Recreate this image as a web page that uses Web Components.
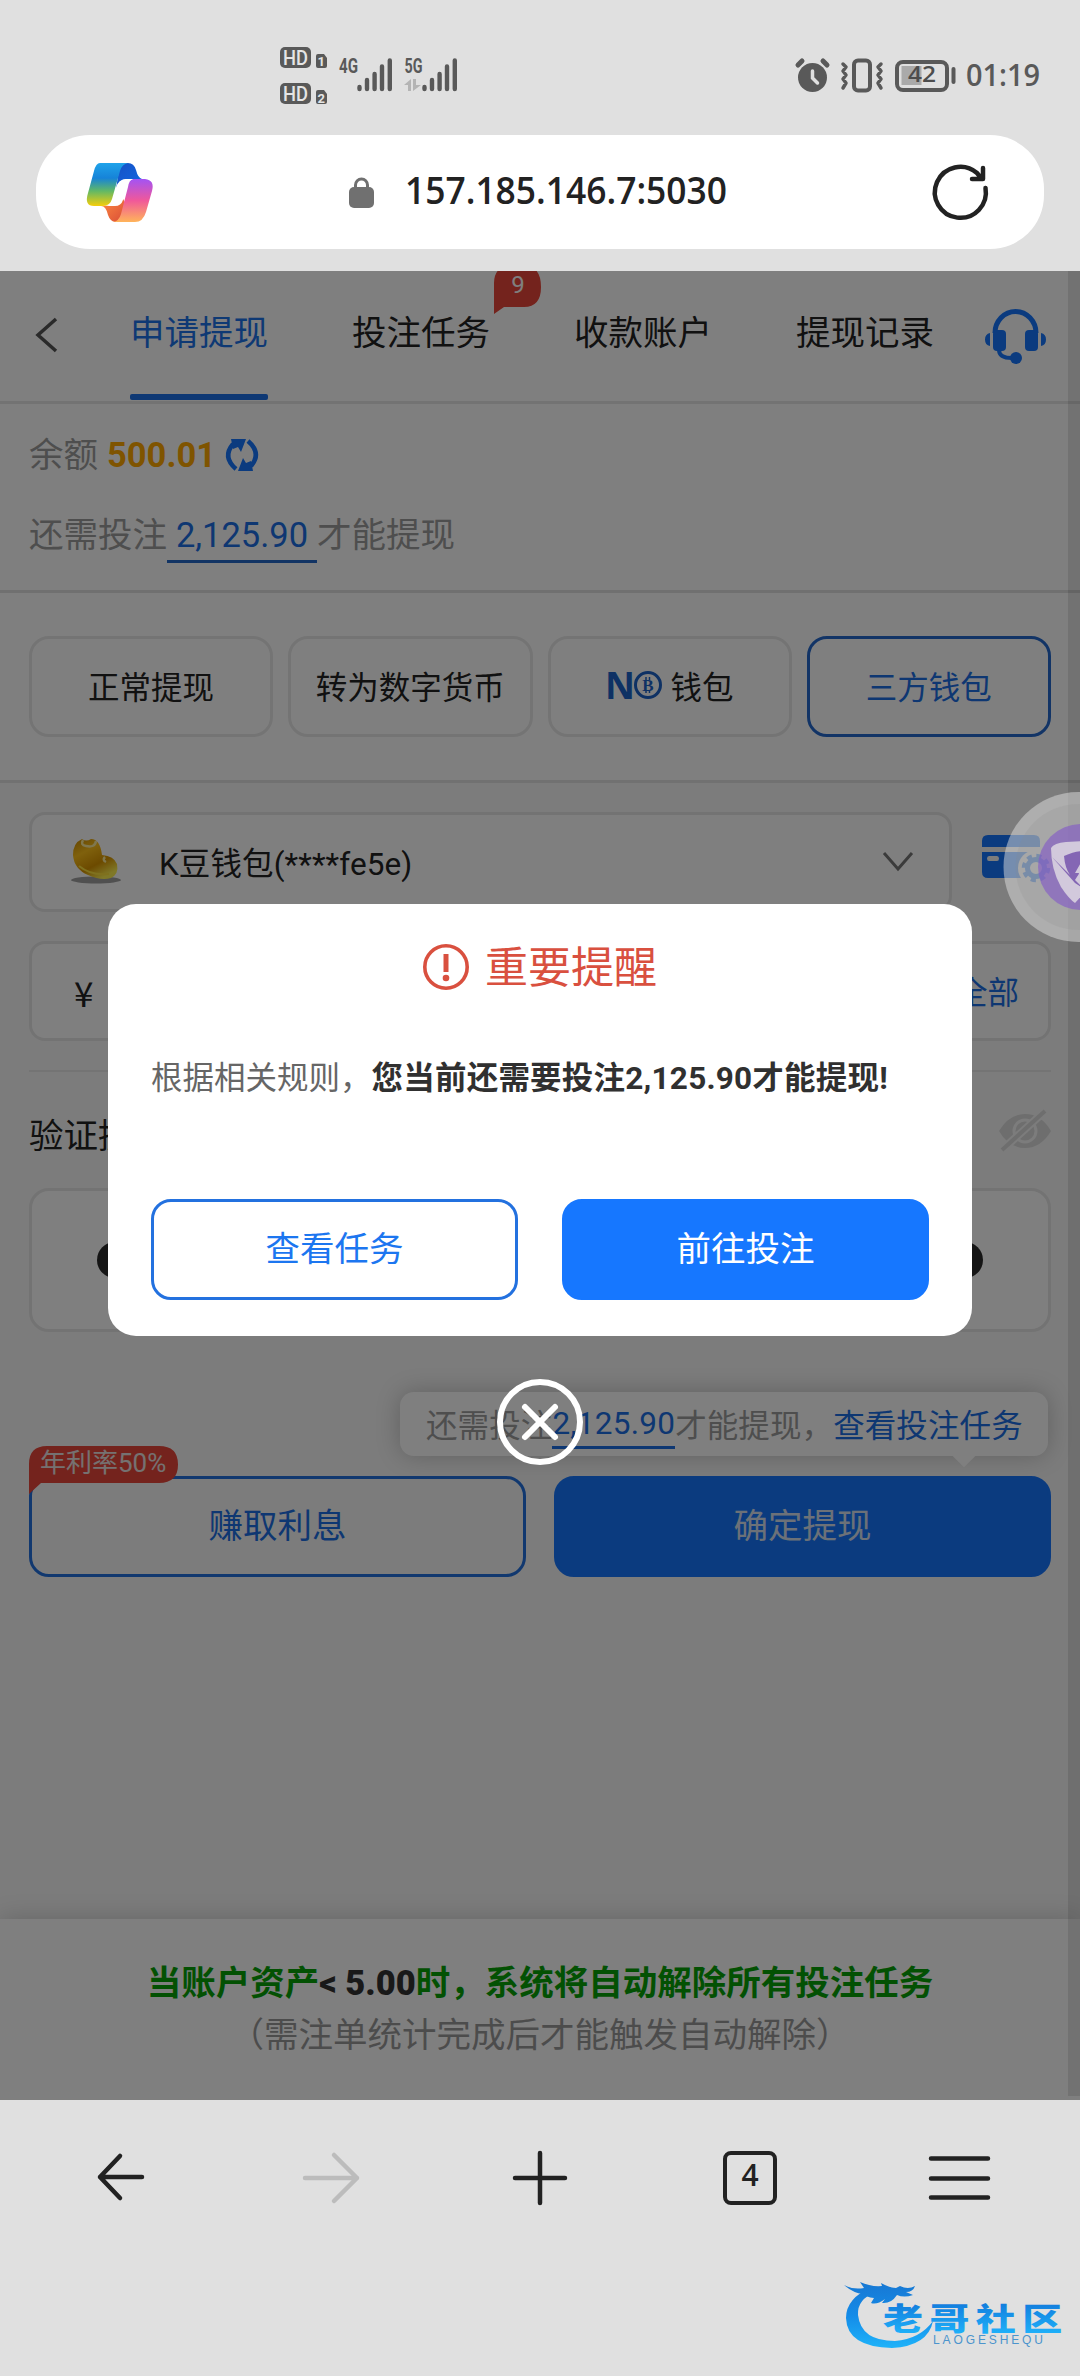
<!DOCTYPE html>
<html lang="zh-CN">
<head>
<meta charset="utf-8">
<title>申请提现</title>
<style>
html,body{margin:0;background:#e0e0e0}
body{font-family:Roboto,"Noto Sans CJK SC",sans-serif;color:#222;width:1080px;height:2376px;overflow:hidden}
</style>
</head>
<body>
<phone-screen></phone-screen>
<script>
const define = (name, css, html) => customElements.define(name, class extends HTMLElement {
  constructor() {
    super();
    this.attachShadow({ mode: 'open' }).innerHTML = `<style>*{box-sizing:border-box}svg{display:block;overflow:visible;flex:none}:host{display:block;box-sizing:border-box}${css}</style>${html}`;
  }
});

define('status-bar', `:host{display:flex;justify-content:space-between;height:135px;padding:45px 40px 0 280px}
.l,.r{display:flex}.l{gap:10px}`, `
<div class="l">
 <svg width="49" height="62" font-family="Roboto" font-weight="500">
  <g fill="#595959"><rect y="2" width="31" height="21" rx="5"/><rect y="38" width="31" height="21" rx="5"/>
  <path d="M38 9h6l3 4v8q0 2-2 2h-7q-2 0-2-2v-10q0-2 2-2zM38 45h6l3 4v8q0 2-2 2h-7q-2 0-2-2v-10q0-2 2-2z"/></g>
  <g fill="#e5e5e5"><text x="3" y="19.500" font-size="20" textLength="25" lengthAdjust="spacingAndGlyphs">HD</text><text x="3" y="55.500" font-size="20" textLength="25" lengthAdjust="spacingAndGlyphs">HD</text>
  <text x="37.500" y="21" font-size="13" font-weight="700">1</text><text x="37.500" y="57.500" font-size="13" font-weight="700">2</text></g>
 </svg>
 <svg width="118" height="62" font-family="Roboto" font-weight="700" fill="#595959">
  <text x="0" y="27.500" font-size="20.500" textLength="19" lengthAdjust="spacingAndGlyphs">4G</text>
  <text x="65.500" y="27.500" font-size="20.500" textLength="18" lengthAdjust="spacingAndGlyphs">5G</text>
  <g fill="none" stroke="#595959" stroke-width="4.400" stroke-linecap="round"><path d="M20.500 42v2M28 35v9M35.600 29v15M43 21.500v22.500M50.800 15.500v28.500"/><path transform="translate(65)" d="M20.500 42v2M28 35v9M35.600 29v15M43 21.500v22.500M50.800 15.500v28.500"/></g>
  <path d="M65 40l7-6v12h-3v-6zM74 34h3v6h5l-8 6z" fill="#b4b4b4"/>
 </svg>
</div>
<div class="r">
 <svg width="246" height="60" fill="none" stroke="#595959" stroke-linecap="round">
  <g transform="translate(1)">
  <circle cx="17.500" cy="32.500" r="14.500" fill="#595959" stroke="none"/><path d="M3 20l4-4M28 16l4 4" stroke-width="5"/><path d="M17.500 26v7l5 5" stroke="#e0e0e0" stroke-width="3.500"/>
  <rect x="59" y="15.500" width="16" height="30" rx="4" stroke-width="4"/>
  <path d="M48 19l3 3-3 4 3 4-3 4 3 4-3 5M86 19l-3 3 3 4-3 4 3 4-3 4 3 5" stroke-width="3.500" stroke-linejoin="round"/></g>
  <rect x="103" y="17" width="50" height="28" rx="6" stroke-width="4"/><rect x="107.500" y="21" width="20" height="19" fill="#aaa" stroke="none"/><path d="M159.500 24v13" stroke-width="4"/>
  <g stroke="none" fill="#4d4d4d" font-family="Open Sans"><text x="114" y="37" font-size="22" font-weight="600" textLength="28" lengthAdjust="spacingAndGlyphs">42</text>
  <text x="172" y="40.500" font-size="31.500" font-weight="600" fill="#595959" textLength="74" lengthAdjust="spacingAndGlyphs">01:19</text></g>
 </svg>
</div>`);

define('address-bar', `:host{display:flex;align-items:center;height:114px;margin:0 36px 22px;padding:0 56px 0 51px;border-radius:54px;background:#fff;justify-content:space-between}
.u{display:flex;align-items:center;gap:31px;margin-right:10px}`, `
<svg width="66" height="62" viewBox="0 0 66 62">
 <defs><linearGradient id="a" x2="0" y2="1"><stop stop-color="#1fa3ea"/><stop offset=".35" stop-color="#1683d8"/><stop offset=".65" stop-color="#61b866"/><stop offset="1" stop-color="#f5ce0a"/></linearGradient>
 <linearGradient id="c" x2="0" y2="1"><stop stop-color="#a353f4"/><stop offset=".5" stop-color="#f0589a"/><stop offset="1" stop-color="#ffb45a"/></linearGradient>
 <linearGradient id="d" x2="1" y2="1"><stop stop-color="#1651c5"/><stop offset="1" stop-color="#1268e2"/></linearGradient><linearGradient id="e" x2="1" y2="1"><stop stop-color="#ff8e43"/><stop offset="1" stop-color="#d84a36"/></linearGradient></defs>
 <path d="M33 2h8q6 0 8 7 2 8 6 9h-16q-8 1-10 10z" fill="url(#d)"/>
 <path d="M14 45q5 0 7 9 2 6 7 7h8l4-16-5-9-6 8z" fill="url(#e)"/>
 <path d="M13 2h28q-6 1-8 8l-8 28q-2 7-9 7h-9q-10 0-6-13l6-22q2-8 6-8z" fill="url(#a)"/>
 <path d="M44 18h14q10 1 7 12l-6 21q-3 10-11 10H26q6-1 8-8l7-27q1-7 5-8z" fill="url(#c)"/>
 <path d="M29 27q2-9 11-9h6q-5 1-6 7l-4 14q-2 6-8 6h-9q5-1 7-7z" fill="#fff"/>
</svg>
<div class="u">
 <svg width="25" height="31"><path d="M6.500 12V8a6 6 0 0 1 12 0v4" fill="none" stroke="#707070" stroke-width="3"/><rect width="25" height="21" y="10" rx="5" fill="#707070"/></svg>
 <svg width="322" height="40"><text x="0" y="32" font-family="Open Sans" font-size="37" font-weight="600" fill="#222" textLength="322" lengthAdjust="spacingAndGlyphs">157.185.146.7:5030</text></svg>
</div>
<svg width="55" height="55" fill="none" stroke="#222" stroke-width="4.500" stroke-linecap="round" stroke-linejoin="round"><path d="M52.500 23A25.500 25.500 0 1 1 44 8l4 5M50 3v11H39"/></svg>`);

define('tab-link', `:host{position:relative;width:138px;height:130px;font-size:34.500px;line-height:125px;white-space:nowrap}
:host([active]){color:#1c72e8}
:host([active])::after{content:"";display:block;height:6px;margin-top:-2px;border-radius:2px;background:#1c70e8}
.n{display:none}:host([count]) .n{display:block;position:absolute;left:142px;top:-6px}`, `<slot></slot>
<svg class="n" width="47" height="49"><path d="M0 49V18Q0 0 20 0h8q19 0 19 22 0 20-17 20H10z" fill="#e8473a"/><text x="24" y="28" text-anchor="middle" fill="#fff" font-size="24" font-family="Roboto">9</text></svg>`);

define('tab-strip', `:host{display:flex;height:133px;background:#fff;border-bottom:3px solid #e6e6e6;align-items:flex-start}
.b{margin:47px 73px 0 36px}.t{display:flex;gap:84px}.h{margin:38px 0 0 51px}`, `
<svg class="b" width="21" height="34" fill="none" stroke="#555" stroke-width="3.500"><path d="M20 1L2 17l18 16"/></svg>
<div class="t"><tab-link active>申请提现</tab-link><tab-link count>投注任务</tab-link><tab-link>收款账户</tab-link><tab-link>提现记录</tab-link></div>
<svg class="h" width="61" height="55" fill="#1677ff"><path d="M10 24a20.500 21.500 0 0 1 41 0" fill="none" stroke="#1677ff" stroke-width="5"/><rect x="8" y="21" width="13" height="21" rx="4"/><rect x="40" y="21" width="13" height="21" rx="4"/><path d="M5 24v13Q0 36 0 30.500T5 24zM56 24v13q5-1 5-6.500T56 24z"/><path d="M14 39v2q0 8 13 8" fill="none" stroke="#1677ff" stroke-width="4"/><circle cx="31" cy="49" r="6"/></svg>`);

define('balance-panel', `:host{height:189px;padding:29px 29px 0;border-bottom:3px solid #e0e0e0;background:#fff;font-size:34.500px;color:#9c9c9c;line-height:44px}
div{display:flex;height:44px;align-items:center}.x{margin-top:36px}b{color:#ffa800;font-weight:700;margin:0 9px 0 9px}
u{text-decoration:none;color:#1c6fe4;border-bottom:3px solid #2468c8;width:150px;text-align:center;height:50px;line-height:44px;margin-top:6px}`, `
<div>余额<b>500.01</b><svg width="34" height="34" fill="none" stroke="#1677ff"><path d="M11 31Q-3 19 8 6" stroke-width="4.500"/><path d="M6 1l15 0-5 13-3-5-5 2z" fill="#1677ff" stroke="none"/><path d="M23 3q14 12 3 25" stroke-width="4.500"/><path d="M28 33l-15 0 5-13 3 5 5-2z" fill="#1677ff" stroke="none"/></svg></div>
<div class="x">还需投注<u>2,125.90</u>才能提现</div>`);

define('method-tile', `:host{flex:1;display:flex;align-items:center;justify-content:center;gap:9px;height:101px;border:3px solid #e9e9e9;border-radius:20px;font-size:31.500px;white-space:nowrap;background:#fff;padding-bottom:3px}
:host([active]){border-color:#2569cd;color:#1c6fe4}`, `<slot></slot>`);

define('method-row', `:host{display:flex;gap:15px;height:190px;padding:43px 29px 0;background:#fff;border-bottom:3px solid #e2e2e2}`, `
<method-tile>正常提现</method-tile><method-tile>转为数字货币</method-tile>
<method-tile><svg width="56" height="30"><text x="-1" y="28.500" font-family="Open Sans" font-size="38" font-weight="700" fill="#1c63c8" textLength="30" lengthAdjust="spacingAndGlyphs">N</text><circle cx="42" cy="15" r="12.500" fill="none" stroke="#1c63c8" stroke-width="3"/><text x="42" y="21" text-anchor="middle" font-family="Liberation Serif" font-weight="700" font-size="17" fill="#1c63c8">B</text><path d="M40 7v3M43.500 7v3M40 20v3M43.500 20v3" stroke="#1c63c8" stroke-width="1.500"/></svg>钱包</method-tile>
<method-tile active>三方钱包</method-tile>`);

define('withdraw-form', `:host{padding:29px 29px 0;font-size:31.500px}
.row{display:flex;align-items:center}.box{display:flex;align-items:center;background:#fff;border:3px solid #e6e6e6;border-radius:16px;height:100px;padding-bottom:3px}
.sel{width:924px;padding:0 36px 3px 39px}.sel span{margin-left:37px;letter-spacing:.1px}.sel .c{margin:2px 0 0 auto}.card{margin:-8px 0 0 30px}
.amt{margin-top:29px;padding:0 29px 2px 42px;justify-content:space-between}.amt i{font-style:normal;color:#1c6fe4}.amt span{font-family:"Noto Sans CJK SC";font-size:35px;line-height:40px;margin-top:4px}
hr{border:0;height:2px;background:#e9e9e9;margin:29px 0 0}
.lab{height:116px;justify-content:space-between;font-size:34.500px;padding-top:6px;margin:0}.lab svg{margin-top:-4px}
.pw{height:144px;border-radius:20px;padding:0}.pw span{width:170.200px;display:flex;justify-content:center}.pw span::after{content:"";width:36px;height:36px;border-radius:50%;background:#2b2b2b}.pw span{flex:none}.pw{justify-content:center}`, `
<div class="row"><div class="box sel">
<svg width="51" height="46"><defs><linearGradient id="g" x2=".6" y2="1"><stop stop-color="#c98a00"/><stop offset=".35" stop-color="#ffc21a"/><stop offset=".7" stop-color="#d99500"/><stop offset="1" stop-color="#fff050"/></linearGradient></defs><ellipse cx="25" cy="42" rx="25" ry="3.500" fill="#777" opacity=".7"/><path d="M11 1Q2 5 2 17q1 14 15 20 13 6 23 3 8-4 6-14-3-8-15-9Q29 1 20 1q-5 3-9 0z" fill="url(#g)"/><path d="M12 2q-3 5 3 6 9 2 10-5M34 19q-3 3 1 5" fill="none" stroke="#ffef9e" stroke-width="2.500"/><path d="M8 28q12 10 30 8" fill="none" stroke="#ffe23c" stroke-width="2"/></svg>
<span>K豆钱包(****fe5e)</span><svg class="c" width="30" height="19" fill="none" stroke="#777" stroke-width="3"><path d="M1 1l14 16L29 1"/></svg></div>
<svg class="card" width="69" height="47"><g fill="#1677ff"><path d="M6 0h46q6 0 6 6v6H0V6q0-6 6-6zM0 17h58v26H6q-6 0-6-6zM7 21q-2 0-2 2.500t2 2.500h8q2 0 2-2.500t-2-2.500z" fill-rule="evenodd"/></g><circle cx="54" cy="33" r="18" fill="#f8f8f8"/><circle cx="54" cy="33" r="8.500" fill="none" stroke="#1677ff" stroke-width="5"/><circle cx="54" cy="33" r="12" fill="none" stroke="#1677ff" stroke-width="4.500" stroke-dasharray="5 4.420"/></svg></div>
<div class="box amt"><span>¥</span><i>全部</i></div><hr>
<div class="row lab"><span>验证提现密码</span><svg width="52" height="40"><path d="M0 20Q10 3 26 3t26 17Q42 37 26 37T0 20z" fill="#dcdcdc"/><circle cx="26" cy="20" r="11" fill="none" stroke="#f8f8f8" stroke-width="3"/><path d="M3 39L46 0" stroke="#f8f8f8" stroke-width="8"/><path d="M3 39L46 0" stroke="#dcdcdc" stroke-width="4"/></svg></div>
<div class="box pw"><span></span><span></span><span></span><span></span><span></span><span></span></div>`);

define('bet-tip', `:host{position:relative;display:flex;align-items:center;align-self:flex-end;width:648px;height:64px;margin:60px 32px 0 0;padding:0 0 3px 26px;border-radius:14px;background:#fff;box-shadow:0 0 24px rgba(0,0,0,.22);font-size:31.500px;color:#9c9c9c;white-space:nowrap;letter-spacing:.1px}
:host::after{content:"";position:absolute;left:556px;top:56px;width:16px;height:16px;background:#fff;transform:rotate(45deg)}
u,i{text-decoration:none;font-style:normal;color:#1c6fe4}u{border-bottom:3px solid #1c6fe4;height:44px;line-height:38px;margin-top:8px;letter-spacing:.25px}`, `还需投注<u>2,125.90</u>才能提现，<i>查看投注任务</i>`);

define('ui-button', `:host{position:relative;flex:1;height:101px;border-radius:20px;border:3px solid #2371df;color:#1c76f0;font-size:34.500px;display:flex;align-items:center;justify-content:center;padding-bottom:8px}
:host([primary]){background:#1677ff;border-color:#1677ff;color:#fff}
:host([soft]){color:#d8e2f0}`, `<slot></slot>`);

define('rate-badge', `:host{position:absolute;left:-3px;top:-33px;width:149px;height:45px;font-size:26px;line-height:34px;color:#ebe3e2;white-space:nowrap;z-index:0}
svg{position:absolute;z-index:-1}span{padding-left:11px}`, `<svg width="149" height="48"><path d="M0 48V18Q0 0 18 0h112q19 0 19 18.500T130 37H12z" fill="#e8473a"/></svg><span>年利率50%</span>`);

define('notice-panel', `:host{margin-top:auto;height:181px;background:#fff;box-shadow:0 0 24px rgba(0,0,0,.18);text-align:center;font-size:34.500px;padding-top:38px;line-height:52px;white-space:nowrap}
p{margin:0}.a{font-weight:700;color:#07a307}.a b{color:#333}.z{color:#999}`, `<p class="a">当账户资产<b>&lt; 5.00</b>时，系统将自动解除所有投注任务</p><p class="z">（需注单统计完成后才能触发自动解除）</p>`);

define('notice-dialog', `:host{position:absolute;left:108px;top:633px;width:864px;height:432px;border-radius:28px;background:#fff;padding:37px 43px 0}
.t{display:flex;gap:16px;justify-content:center;align-items:center;height:52px;font-size:43px;color:#d9503f}.t span{margin-top:-6px}
p{margin:58px 0 0;height:56px;line-height:56px;font-size:31.500px;color:#666;white-space:nowrap}b{color:#303030;letter-spacing:.22px}
.b{display:flex;gap:44px;margin-top:92px}
.x{position:absolute;left:389px;top:475px}`, `
<div class="t"><svg width="46" height="46" fill="none" stroke="#d9503f"><circle cx="23" cy="23" r="21.200" stroke-width="3.600"/><path d="M23 10v18" stroke-width="5"/><circle cx="23" cy="34" r="3.300" fill="#d9503f" stroke="none"/></svg><span>重要提醒</span></div>
<p>根据相关规则，<b>您当前还需要投注2,125.90才能提现!</b></p>
<div class="b"><ui-button>查看任务</ui-button><ui-button primary>前往投注</ui-button></div>
<svg class="x" width="86" height="86" fill="none" stroke="#fff" stroke-width="6" stroke-linecap="round"><circle cx="43" cy="43" r="40"/><path d="M28 28l30 30M58 28L28 58"/></svg>`);

define('float-bubble', `:host{position:absolute;left:1003px;top:521px;width:77px;height:150px;overflow:hidden}`, `
<svg width="150" height="150"><circle cx="75.500" cy="75" r="75" fill="#e0e0e0" opacity=".5"/><circle cx="75.500" cy="75" r="63" fill="#888" opacity=".18"/><circle cx="78" cy="75" r="43" fill="#8358c8" opacity=".62"/>
<path d="M48 56q3-5 15-6l17-1v53l-8 9q-6-4-14-16-10-18-10-39z" fill="#d2c9dc"/><path d="M80 59q-8 0-19 5 1 12 6 19l5 5q3-6 8-9zM49 65l23 26 8 5" fill="#8466b4"/><path d="M80 67l-8 14h4l-2 8 6-3z" fill="#d2c9dc"/></svg>`);

define('web-view', `:host{position:relative;display:flex;flex-direction:column;height:1829px;background:#f8f8f8;overflow:hidden}
.act{display:flex;gap:28px;padding:0 29px;margin-top:20px}.act ui-button:first-child{color:#1c6fe4}
.dim{position:absolute;inset:0;background:rgba(0,0,0,.5)}.bar{position:absolute;right:0;top:0;width:12px;height:1825px;background:rgba(0,0,0,.1)}`, `
<tab-strip></tab-strip><balance-panel></balance-panel><method-row></method-row><withdraw-form></withdraw-form>
<bet-tip></bet-tip>
<div class="act"><ui-button>赚取利息<rate-badge></rate-badge></ui-button><ui-button primary soft>确定提现</ui-button></div>
<notice-panel></notice-panel>
<div class="dim"></div><div class="bar"></div><notice-dialog></notice-dialog><float-bubble></float-bubble>`);

define('browser-toolbar', `:host{display:flex;height:157px;align-items:center;padding:0 90px 3px 96px}
.f{margin-left:157px}.p{margin-left:154px}.t{margin-left:156px}.m{margin-left:152px}`, `
<svg width="50" height="54" fill="none" stroke="#222" stroke-width="4.500" stroke-linecap="round" stroke-linejoin="round"><path d="M46 27H4M24 6L4 27l20 21"/></svg>
<svg class="f" width="56" height="54" fill="none" stroke="#bcbcbc" stroke-width="4.500" stroke-linecap="round" stroke-linejoin="round"><path d="M2 28h52M31 5l23 23-23 23"/></svg>
<svg class="p" width="54" height="54" fill="none" stroke="#222" stroke-width="4.500" stroke-linecap="round"><path d="M2 28h50M27 3v50"/></svg>
<svg class="t" width="54" height="54"><rect x="2" y="3" width="50" height="50" rx="6" fill="none" stroke="#222" stroke-width="4"/><text x="27" y="36" text-anchor="middle" font-family="Open Sans" font-weight="600" font-size="30" fill="#222">4</text></svg>
<svg class="m" width="61" height="54" stroke="#222" stroke-width="4.500" stroke-linecap="round"><path d="M2 8.500h57M2 28.500h57M2 47.500h57"/></svg>`);

define('site-mark', `:host{display:flex;justify-content:flex-end;padding:24px 16px 0}`, `
<svg width="222" height="70"><defs><linearGradient id="w" gradientUnits="userSpaceOnUse" x1="0" y1="0" x2="0" y2="68"><stop stop-color="#1877d2"/><stop offset=".5" stop-color="#148be8"/><stop offset="1" stop-color="#1fb4fa"/></linearGradient>
<linearGradient id="v" gradientUnits="userSpaceOnUse" x1="0" y1="-28" x2="0" y2="2"><stop stop-color="#127bdc"/><stop offset="1" stop-color="#1eaef8"/></linearGradient></defs>
<path d="M30 6Q4 17 4 37q1 29 46 30 36-2 41-27-13 18-38 20-34 0-37-26-1-16 18-23z" fill="url(#w)"/><path d="M2 4q9 5 20 3L18 1q11 5 22 4l-1-3q9 5 15 5l4-2q8 4 15 0-2 6-9 6l7 3q-9 3-16 0-6 9-15 8l3-4q-8 6-14 4l3-5q-8-1-11-4-10-1-19-9z" fill="url(#w)"/>
<text font-family="Noto Sans CJK SC" font-weight="900" font-size="31" transform="translate(41 49) scale(1.290 1)" textLength="139" fill="url(#v)">老哥社区</text>
<text x="91" y="63" font-family="Liberation Sans" font-size="12" fill="#4b94cd" textLength="110">LAOGESHEQU</text></svg>`);

define('phone-screen', `:host{width:1080px;height:2376px;background:#e0e0e0;overflow:hidden}`, `
<status-bar></status-bar><address-bar></address-bar><web-view></web-view><browser-toolbar></browser-toolbar><site-mark></site-mark>`);
</script>
</body>
</html>
